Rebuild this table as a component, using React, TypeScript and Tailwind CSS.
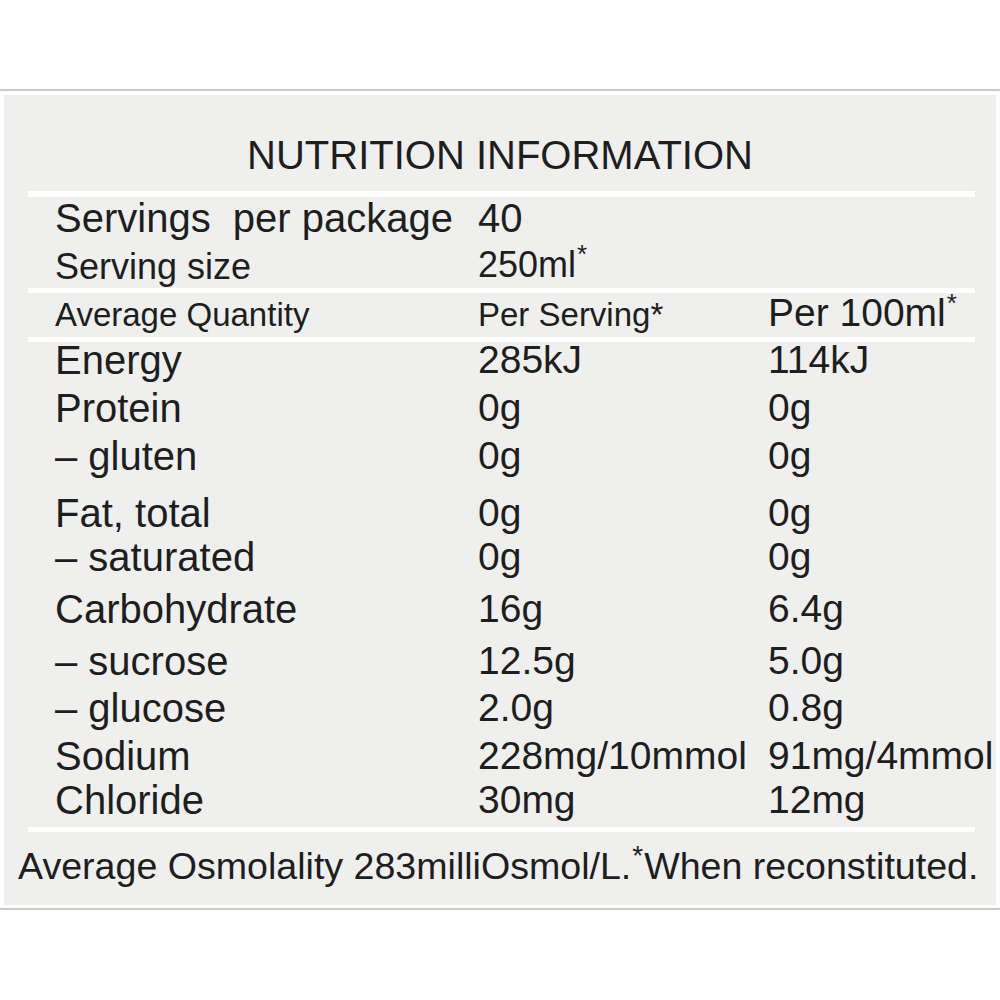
import React from "react";

const font = { fontFamily: '"Liberation Sans", Arial, sans-serif' };

type Row = { label: string; a: string; b: string; h: string };

const rows: Row[] = [
  { label: "Energy", a: "285kJ", b: "114kJ", h: "h-[48px]" },
  { label: "Protein", a: "0g", b: "0g", h: "h-[48px]" },
  { label: "\u2013 gluten", a: "0g", b: "0g", h: "h-[57px]" },
  { label: "Fat, total", a: "0g", b: "0g", h: "h-[44px]" },
  { label: "\u2013 saturated", a: "0g", b: "0g", h: "h-[52px]" },
  { label: "Carbohydrate", a: "16g", b: "6.4g", h: "h-[52px]" },
  { label: "\u2013 sucrose", a: "12.5g", b: "5.0g", h: "h-[47px]" },
  { label: "\u2013 glucose", a: "2.0g", b: "0.8g", h: "h-[48px]" },
  { label: "Sodium", a: "228mg/10mmol", b: "91mg/4mmol", h: "h-[44px]" },
  { label: "Chloride", a: "30mg", b: "12mg", h: "h-[48px]" },
];

function Line({ className = "" }: { className?: string }) {
  return <div className={`ml-[24px] mr-[21px] bg-white ${className}`} />;
}

export default function App() {
  return (
    <div className="w-[1000px] h-[1000px] bg-white pt-[89px] text-[#1e1e1e]" style={font}>
      <div className="h-[2px] bg-[#c9c9c9]" />
      <div className="mx-[4px] mt-[4px] h-[810px] bg-[#efefee] flex flex-col">
        <div className="h-[96px] pt-[40px] text-center text-[40px] leading-[40px]">
          NUTRITION INFORMATION
        </div>
        <Line className="h-[6px]" />
        <div className="pl-[51px] flex h-[42px] items-center text-[40px] leading-[42px]">
          <div className="w-[423px] whitespace-pre">Servings  per package</div>
          <div>40</div>
        </div>
        <div className="pl-[51px] flex h-[49px] items-center text-[36px] leading-[44px] pt-[6px]">
          <div className="w-[423px]">Serving size</div>
          <div>
            250ml<span className="text-[26px] relative top-[-14px] ml-[1px]">*</span>
          </div>
        </div>
        <Line className="h-[5px]" />
        <div className="pl-[51px] flex h-[44px] items-center leading-[44px]">
          <div className="w-[423px] text-[33px]">Average Quantity</div>
          <div className="w-[290px] text-[33px]">Per Serving*</div>
          <div className="text-[39px]">
            Per 100ml<span className="text-[26px] relative top-[-14px] ml-[1px]">*</span>
          </div>
        </div>
        <Line className="h-[5px]" />
        <div className="mt-[-6px]">
          {rows.map((r) => (
            <div key={r.label} className={`pl-[51px] flex ${r.h} leading-[48px]`}>
              <div className="w-[423px] whitespace-pre text-[40px]">{r.label}</div>
              <div className="w-[290px] text-[39px]">{r.a}</div>
              <div className="text-[39px]">{r.b}</div>
            </div>
          ))}
        </div>
        <Line className="mt-[3px] h-[5px]" />
        <div className="pl-[14px] mt-[14px] text-[37.6px] leading-[40px] whitespace-nowrap">
          Average Osmolality 283milliOsmol/L.
          <span className="text-[28px] relative top-[-14px] mx-[1px]">*</span>
          When reconstituted.
        </div>
      </div>
      <div className="mt-[3px] h-[2px] bg-[#c9c9c9]" />
    </div>
  );
}
